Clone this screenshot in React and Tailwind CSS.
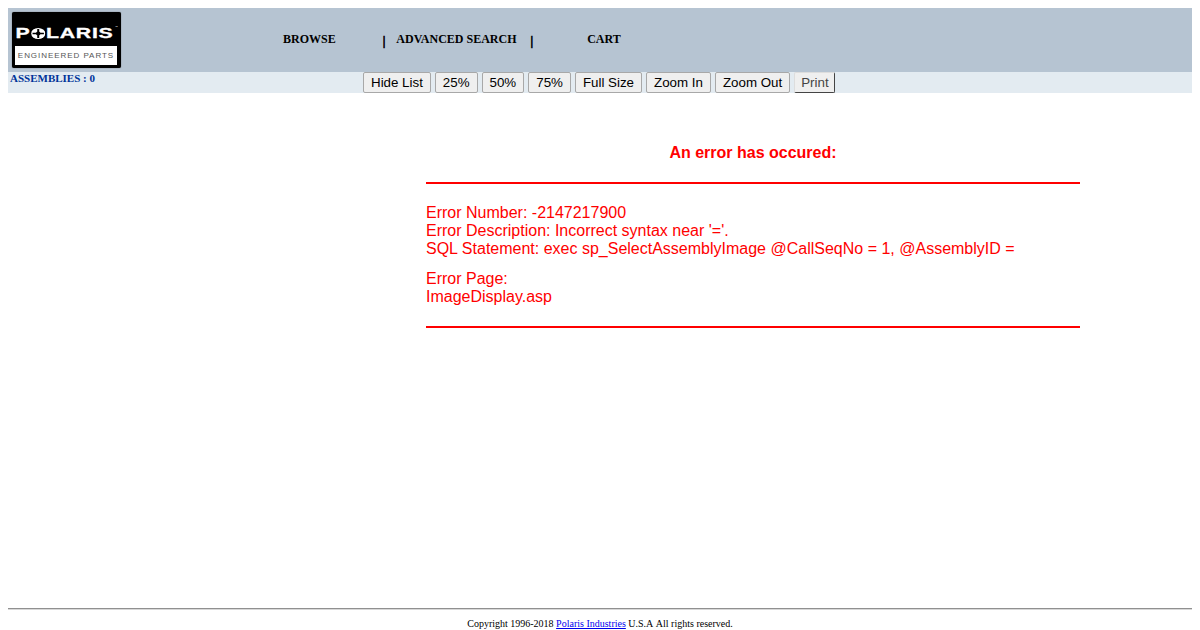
import React from "react";

const serif = "font-['Liberation_Serif',serif]";
const sans = "font-['Liberation_Sans',sans-serif]";

function ToolButton({ children, dim }) {
  return (
    <button
      type="button"
      className={
        "h-[21px] rounded-[2px] border bg-[#efefef] text-[13.33px] leading-[15px] " +
        sans +
        (dim
          ? " pl-[6px] pr-[5px] text-[#444] border-t-[#ddd] border-l-[#ddd] border-r-[#444] border-b-[#444]"
          : " px-[7px] text-black border-[#a8a8a8]")
      }
    >
      {children}
    </button>
  );
}

function Logo() {
  return (
    <div className="w-[109px] h-[56px] bg-black rounded-[2px] flex flex-col pt-[14px] px-[3px] shadow-[0_0_1px_#333]">
      <div className="relative h-[14px] flex items-center justify-center">
        <div className="flex items-center -translate-x-[2px] scale-x-[1.42] text-white font-['Liberation_Sans',sans-serif] font-bold text-[15px] leading-[14px] tracking-[0.5px] [-webkit-text-stroke:0.3px_white]">
          <span>P</span>
          <svg width="10" height="11" viewBox="0 0 10 11" className="mx-[0.5px]">
            <ellipse cx="5" cy="5.5" rx="5" ry="5.5" fill="#fff" />
            <path d="M5 1v9M1 5.5h8" stroke="#000" strokeWidth="1.4" />
            <ellipse cx="5" cy="5.5" rx="1.6" ry="2" fill="#000" />
          </svg>
          <span>LARIS</span>
        </div>
        <span className="absolute right-[0px] top-[-1px] text-white text-[3px] leading-[4px] font-['Liberation_Sans',sans-serif]">™</span>
      </div>
      <div className="mt-[6px] w-[102px] h-[19px] bg-white flex items-center justify-center text-[#555] font-['Liberation_Sans',sans-serif] text-[8px] leading-[19px] tracking-[0.95px] whitespace-nowrap">
        <span>ENGINEERED PARTS</span>
      </div>
    </div>
  );
}

export default function App() {
  return (
    <div className={"m-2 h-[622px] flex flex-col bg-white " + serif}>
      <header className="h-[64px] bg-[#b6c4d2] flex items-center pl-[4px] shrink-0">
        <Logo />
        <nav className="flex items-center text-[12px] font-bold text-black leading-[14px] -mt-[2px]">
          <span className="ml-[162px]">BROWSE</span>
          <span className="ml-[47px] mt-[4px] [-webkit-text-stroke:0.6px_black]">|</span>
          <span className="ml-[11px]">ADVANCED SEARCH</span>
          <span className="ml-[14px] mt-[4px] [-webkit-text-stroke:0.6px_black]">|</span>
          <span className="ml-[54px]">CART</span>
        </nav>
      </header>
      <div className="h-[21px] bg-[#e3ebf1] flex shrink-0">
        <div className="w-[355px] pl-[2px] text-[11px] leading-[13px] font-bold text-[#003399]">
          ASSEMBLIES : 0
        </div>
        <div className="flex gap-[4px]">
          <ToolButton>Hide List</ToolButton>
          <ToolButton>25%</ToolButton>
          <ToolButton>50%</ToolButton>
          <ToolButton>75%</ToolButton>
          <ToolButton>Full Size</ToolButton>
          <ToolButton>Zoom In</ToolButton>
          <ToolButton>Zoom Out</ToolButton>
          <ToolButton dim>Print</ToolButton>
        </div>
      </div>
      <main className={"flex-1 pl-[418px] pt-[51px] text-[16px] leading-[18px] text-[#ff0000] " + sans}>
        <div className="w-[654px]">
          <h1 className="text-center font-bold text-[16px] leading-[18px]">An error has occured:</h1>
          <hr className="mt-[20px] border-0 h-[2px] bg-[#ff0000]" />
          <p className="mt-[20px]">Error Number: -2147217900</p>
          <p>Error Description: Incorrect syntax near '='.</p>
          <p>SQL Statement: exec sp_SelectAssemblyImage @CallSeqNo = 1, @AssemblyID =</p>
          <p className="mt-[12px]">Error Page:</p>
          <p>ImageDisplay.asp</p>
          <hr className="mt-[20px] border-0 h-[2px] bg-[#ff0000]" />
        </div>
      </main>
      <footer className="shrink-0">
        <hr className="h-[2px] border-0 border-t border-t-[#909090] border-b border-b-[#d8d8d8]" />
        <p className="mt-[8px] text-center text-[10px] leading-[12px] text-black [font-kerning:none]">
          Copyright 1996-2018{" "}
          <a href="#" className="text-[#0000ee] underline">
            Polaris Industries
          </a>{" "}
          U.S.A All rights reserved.
        </p>
      </footer>
    </div>
  );
}
